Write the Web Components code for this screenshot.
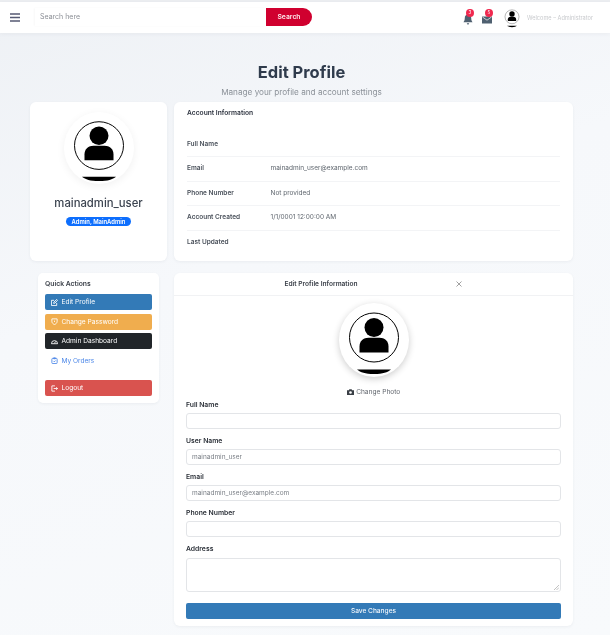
<!DOCTYPE html>
<html lang="en">
<head>
<meta charset="utf-8">
<title>Edit Profile</title>
<style>
  html, body { margin: 0; padding: 0; }
  body {
    width: 610px;
    height: 635px;
    overflow: hidden;
    font-family: Inter, "Liberation Sans", sans-serif;
    background: linear-gradient(160deg, #eef1f5 0%, #f6f8fb 40%, #f8fafc 100%);
  }
  app-header, profile-page { filter: blur(.3px); }
</style>
</head>
<body>
<app-header></app-header>
<profile-page></profile-page>

<script>
const AVATAR_SVG = `
  <svg viewBox="0 0 70 74" preserveAspectRatio="none" width="100%" height="100%">
    <circle cx="35" cy="34.500" r="24.500" fill="#fff" stroke="#000" stroke-width="1"/>
    <circle cx="35" cy="24.500" r="9.500" fill="#000"/>
    <path d="M20.500 49.500v-6c0-5.500 4-8.800 9-8.800h11c5 0 9 3.300 9 8.800v6z" fill="#000"/>
    <path d="M18 66.500h34c-3.500 2.800-8 4.500-17 4.500s-13.500-1.700-17-4.500z" fill="#000"/>
  </svg>`;

class AppHeader extends HTMLElement {
  constructor() {
    super();
    this.attachShadow({mode: "open"});
  }
  connectedCallback() {
    this.shadowRoot.innerHTML = `
    <style>
      :host { display: block; padding-top: 2px; background: #eceef1; }
      .bar {
        height: 31px;
        background: #fff;
        display: flex;
        align-items: center;
        padding: 0 17px 0 10px;
        box-shadow: 0 1px 4px rgba(60, 70, 90, .06);
      }
      .burger { width: 10px; height: 9px; margin-right: 15px; }
      .search { display: flex; height: 18px; width: 277px; margin-top: -1px; }
      .search span {
        flex: 1;
        font-size: 7px;
        line-height: 18px;
        color: #8c8f96;
        padding-left: 5px;
        box-shadow: -1px 0 2px rgba(0, 0, 0, .03);
      }
      .search b {
        width: 46px;
        background: #d0002f;
        color: #fde8ec;
        border-radius: 0 9px 9px 0;
        font-size: 6.800px;
        font-weight: 600;
        line-height: 18px;
        text-align: center;
      }
      .right { margin-left: auto; display: flex; align-items: center; }
      .ico { position: relative; width: 10px; height: 11px; display: block; }
      .ico svg { width: 10px; height: 11px; display: block; margin-top: 2px; }
      .ico i {
        position: absolute;
        top: -3px;
        left: 3px;
        width: 7.500px;
        height: 8px;
        border-radius: 50%;
        background: #f0294f;
        color: #fff;
        font: normal 4.500px/8px Inter, sans-serif;
        text-align: center;
      }
      .user { width: 20px; height: 21px; margin: 0 5px 0 10px; }
      .welcome { font-size: 5.600px; color: #c8cacd; white-space: nowrap; }
    </style>
    <div class="bar">
      <svg class="burger" viewBox="0 0 10 9"><path d="M0 1h10M0 4.500h10M0 8h10" stroke="#565a73" stroke-width="1.500"/></svg>
      <div class="search"><span>Search here</span><b>Search</b></div>
      <div class="right">
        <div class="ico" style="margin-right:9px">
          <svg viewBox="0 0 10 11"><path d="M5 .5c-2 0-3.200 1.500-3.200 3.500 0 2.500-.8 3.500-1.300 4.200h9C9 7.500 8.200 6.500 8.200 4 8.200 2 7 .5 5 .5zM3.800 9.200c.2.800.6 1.300 1.200 1.300s1-.5 1.200-1.300z" fill="#4f6070"/></svg>
          <i>3</i>
        </div>
        <div class="ico">
          <svg viewBox="0 0 10 11"><path d="M0 2.500h10V9.500H0z" fill="#4f6070"/><path d="M.5 3l4.500 3.200L9.500 3" fill="none" stroke="#fff" stroke-width=".7"/></svg>
          <i>5</i>
        </div>
        <div class="user">${AVATAR_SVG}</div>
        <span class="welcome">Welcome &ndash; Administrator</span>
      </div>
    </div>`;
  }
}
customElements.define("app-header", AppHeader);

class ProfileAvatar extends HTMLElement {
  constructor() {
    super();
    this.attachShadow({mode: "open"});
  }
  connectedCallback() {
    this.shadowRoot.innerHTML = `
    <style>
      :host {
        display: block;
        width: 70px;
        height: var(--avatar-h, 72px);
        margin: 0 auto;
        border-radius: 50%;
        background: #fff;
        overflow: hidden;
        box-shadow: var(--avatar-shadow, 0 2px 8px rgba(0, 0, 0, .06));
      }
    </style>${AVATAR_SVG}`;
  }
}
customElements.define("profile-avatar", ProfileAvatar);

class InfoCard extends HTMLElement {
  constructor() {
    super();
    this.attachShadow({mode: "open"});
    this.shadowRoot.innerHTML = `
    <style>
      :host {
        display: block;
        background: #fff;
        border-radius: 6px;
        box-shadow: 0 1px 3px rgba(40, 50, 70, .06);
      }
    </style><slot></slot>`;
  }
}
customElements.define("info-card", InfoCard);

class ProfileSummary extends HTMLElement {
  constructor() {
    super();
    this.attachShadow({mode: "open"});
  }
  connectedCallback() {
    this.shadowRoot.innerHTML = `
    <style>
      :host { display: block; height: 159px; padding-top: 10px; box-sizing: border-box; text-align: center; }
      h2 {
        margin: 12px 0 7px;
        font-size: 11.300px;
        line-height: 14px;
        font-weight: 500;
        color: #3c4450;
      }
      span {
        display: inline-block;
        background: #0d6efd;
        color: #fff;
        font-size: 5.900px;
        font-weight: 600;
        line-height: 9px;
        padding: 0 6px;
        border-radius: 5px;
        vertical-align: top;
      }
    </style>
    <profile-avatar></profile-avatar>
    <h2>mainadmin_user</h2>
    <span>Admin, MainAdmin</span>`;
  }
}
customElements.define("profile-summary", ProfileSummary);

class AccountInfo extends HTMLElement {
  constructor() {
    super();
    this.attachShadow({mode: "open"});
  }
  connectedCallback() {
    const rows = [
      ["Full Name", ""],
      ["Email", "mainadmin_user@example.com"],
      ["Phone Number", "Not provided"],
      ["Account Created", "1/1/0001 12:00:00 AM"],
      ["Last Updated", ""]
    ];
    this.shadowRoot.innerHTML = `
    <style>
      :host { display: block; height: 159px; padding: 6px 13px 0; box-sizing: border-box; }
      h3 { margin: 0 0 13.500px; font-size: 6.700px; line-height: 11px; font-weight: 600; color: #2e3440; }
      .row {
        display: grid;
        grid-template-columns: 83.500px 1fr;
        height: 24.500px;
        box-sizing: border-box;
        padding-top: 6px;
        font-size: 6.500px;
        line-height: 10px;
        color: #5f666e;
        border-bottom: 1px solid #f3f4f6;
      }
      .row:last-child { border-bottom: 0; }
      .row b { font-weight: 600; color: #4a515b; }
    </style>
    <h3>Account Information</h3>
    ${rows.map(r => `<div class="row"><b>${r[0]}</b><span>${r[1]}</span></div>`).join("")}`;
  }
}
customElements.define("account-info", AccountInfo);

class ActionLink extends HTMLElement {
  constructor() {
    super();
    this.attachShadow({mode: "open"});
    this.shadowRoot.innerHTML = `
    <style>
      :host {
        display: flex;
        align-items: center;
        gap: 3.500px;
        height: 16px;
        padding-left: 6px;
        border-radius: 2px;
        font-size: 6.600px;
        color: #fff;
      }
      ::slotted(svg) { width: 7px; height: 7px; flex: none; }
    </style><slot></slot>`;
  }
}
customElements.define("action-link", ActionLink);

class QuickActions extends HTMLElement {
  constructor() {
    super();
    this.attachShadow({mode: "open"});
  }
  connectedCallback() {
    const stroke = 'fill="none" stroke="currentColor" stroke-width="1" viewBox="0 0 8 8"';
    this.shadowRoot.innerHTML = `
    <style>
      :host {
        display: block;
        margin: 12px 8px 0;
        padding: 6px 7px 8px;
        height: 130px;
        box-sizing: border-box;
        background: #fff;
        border-radius: 5px;
        box-shadow: 0 1px 3px rgba(40, 50, 70, .06);
      }
      h4 { margin: 0 0 5px; font-size: 6.800px; line-height: 10px; font-weight: 600; color: #3b4049; }
      div { display: flex; flex-direction: column; gap: 3.500px; }
      svg { width: 7px; height: 7px; }
    </style>
    <h4>Quick Actions</h4>
    <div>
      <action-link style="background:#337ab7">
        <svg ${stroke}><path d="M6.500 4.500v3h-6v-6h3"/><path d="M3 5l.3-1.500L6.500.5l1 1L4.500 4.700z"/></svg>Edit Profile
      </action-link>
      <action-link style="background:#f0ad4e">
        <svg ${stroke}><path d="M1 1h6v3c0 1.500-1.500 3-3 3.500C2.500 7 1 5.500 1 4z"/><path d="M4 3v1.500"/></svg>Change Password
      </action-link>
      <action-link style="background:#212529">
        <svg ${stroke}><path d="M.5 6.500a3.500 3.500 0 0 1 7 0z"/><path d="M4 6l1.200-2"/></svg>Admin Dashboard
      </action-link>
      <action-link style="color:#4a86e8">
        <svg ${stroke}><rect x="1" y="1.500" width="6" height="6" rx="1"/><path d="M3 1h2v1H3zM2.800 4.500l1 1 1.500-1.500"/></svg>My Orders
      </action-link>
      <action-link style="background:#d9534f;margin-top:8px">
        <svg ${stroke}><path d="M4.500 1H1v6h3.500"/><path d="M3 4h4.500M6 2.500L7.500 4 6 5.500"/></svg>Logout
      </action-link>
    </div>`;
  }
}
customElements.define("quick-actions", QuickActions);

class FormField extends HTMLElement {
  constructor() {
    super();
    this.attachShadow({mode: "open"});
  }
  connectedCallback() {
    const multi = this.hasAttribute("multi");
    const value = this.getAttribute("value") || "";
    this.shadowRoot.innerHTML = `
    <style>
      :host { display: block; margin-bottom: ${multi ? 11 : 8}px; }
      label { display: block; height: 8px; margin-bottom: ${multi ? 5 : 4}px; font-size: 6.800px; line-height: 8px; font-weight: 600; color: #2b3038; }
      .box {
        position: relative;
        height: ${multi ? 34 : 16}px;
        box-sizing: border-box;
        padding-left: 5px;
        border: 1px solid #e3e5e8;
        border-radius: 3px;
        background: #fff;
        font-size: 6.500px;
        line-height: 14px;
        color: #7a7f86;
      }
      .grip { position: absolute; right: 1px; bottom: 1px; width: 5px; height: 5px; }
    </style>
    <label>${this.getAttribute("label")}</label>
    <div class="box">${value}${multi ? '<svg class="grip" viewBox="0 0 5 5"><path d="M0 5l5-5M2.500 5L5 2.500" stroke="#999" stroke-width=".6"/></svg>' : ""}</div>`;
  }
}
customElements.define("form-field", FormField);

class EditProfile extends HTMLElement {
  constructor() {
    super();
    this.attachShadow({mode: "open"});
  }
  connectedCallback() {
    this.shadowRoot.innerHTML = `
    <style>
      :host {
        display: block;
        height: 353px;
        box-sizing: border-box;
        background: #fff;
        border-radius: 6px;
        box-shadow: 0 1px 3px rgba(40, 50, 70, .06);
      }
      header {
        height: 22px;
        display: flex;
        align-items: center;
        padding-left: 110.500px;
        border-bottom: 1px solid #f1f2f4;
        font-size: 6.600px;
        font-weight: 600;
        color: #3b4049;
      }
      header svg { width: 6px; height: 6px; margin-left: 99px; }
      .body { padding: 7px 12px 0; --avatar-h: 74px; --avatar-shadow: 0 2px 7px rgba(0, 0, 0, .2); }
      .change {
        display: flex;
        align-items: center;
        justify-content: center;
        gap: 2.500px;
        height: 10px;
        margin: 10px 0 4px;
        font-size: 6.600px;
        color: #62676e;
      }
      .change svg { width: 7px; height: 6px; }
      .save {
        height: 16px;
        background: #337ab7;
        border-radius: 2px;
        color: #eef4fa;
        font-size: 6.600px;
        font-weight: 500;
        line-height: 16px;
        text-align: center;
      }
    </style>
    <header>
      <span>Edit Profile Information</span>
      <svg viewBox="0 0 6 6"><path d="M.5.5l5 5M5.500.5l-5 5" stroke="#777" stroke-width=".7"/></svg>
    </header>
    <div class="body">
      <profile-avatar></profile-avatar>
      <div class="change">
        <svg viewBox="0 0 7 6"><path d="M0 1.200h1.800L2.400.2h2.200l.6 1H7V6H0z" fill="#3a3f46"/><circle cx="3.500" cy="3.500" r="1.300" fill="#fff"/></svg>
        Change Photo
      </div>
      <form-field label="Full Name"></form-field>
      <form-field label="User Name" value="mainadmin_user"></form-field>
      <form-field label="Email" value="mainadmin_user@example.com"></form-field>
      <form-field label="Phone Number"></form-field>
      <form-field label="Address" multi></form-field>
      <div class="save">Save Changes</div>
    </div>`;
  }
}
customElements.define("edit-profile", EditProfile);

class ProfilePage extends HTMLElement {
  constructor() {
    super();
    this.attachShadow({mode: "open"});
  }
  connectedCallback() {
    this.shadowRoot.innerHTML = `
    <style>
      :host { display: block; padding: 29px 37px 0 30px; }
      .head { text-align: center; }
      h1 { margin: 0; font-size: 16.500px; line-height: 20px; font-weight: 700; color: #2f3b4c; }
      p { margin: 4px 0 4px; font-size: 8.200px; line-height: 12px; color: #8b9198; }
      .grid { display: grid; grid-template-columns: 137px 399px; column-gap: 7px; }
      .bottom { margin-top: 12px; }
    </style>
    <div class="head">
      <h1>Edit Profile</h1>
      <p>Manage your profile and account settings</p>
    </div>
    <div class="grid">
      <info-card><profile-summary></profile-summary></info-card>
      <info-card><account-info></account-info></info-card>
      <quick-actions></quick-actions>
      <edit-profile class="bottom"></edit-profile>
    </div>`;
  }
}
customElements.define("profile-page", ProfilePage);
</script>
</body>
</html>
